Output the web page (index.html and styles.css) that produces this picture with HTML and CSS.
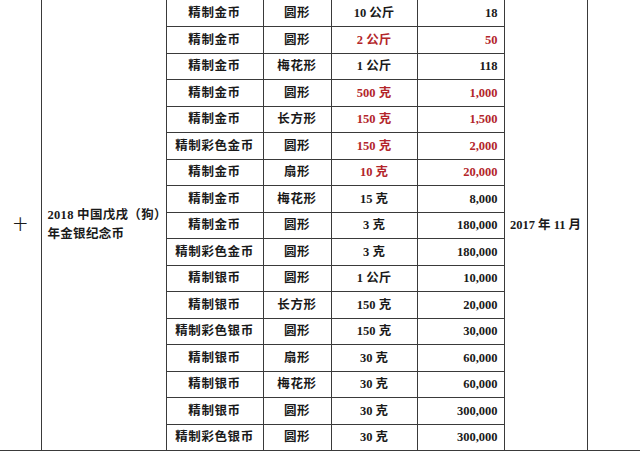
FILE: index.html
```html
<!DOCTYPE html>
<html lang="zh-CN">
<head>
<meta charset="utf-8">
<title>2018中国戊戌（狗）年金银纪念币</title>
<link rel="stylesheet" href="styles.css">
</head>
<body>
<table class="coins">
  <colgroup>
    <col class="c-no"><col class="c-name"><col class="c-kind"><col class="c-shape"><col class="c-weight"><col class="c-count"><col class="c-date"><col class="c-note">
  </colgroup>
  <tbody>
    <tr>
      <td class="no" rowspan="17">十</td>
      <td class="name" rowspan="17">2018 中国戊戌（狗）<br>年金银纪念币</td>
      <td class="kind">精制金币</td><td class="shape">圆形</td><td class="weight">10 公斤</td><td class="count">18</td>
      <td class="date" rowspan="17">2017 年 11 月</td>
      <td class="note" rowspan="17"></td>
    </tr>
    <tr class="red"><td class="kind">精制金币</td><td class="shape">圆形</td><td class="weight">2 公斤</td><td class="count">50</td></tr>
    <tr><td class="kind">精制金币</td><td class="shape">梅花形</td><td class="weight">1 公斤</td><td class="count">118</td></tr>
    <tr class="red"><td class="kind">精制金币</td><td class="shape">圆形</td><td class="weight">500 克</td><td class="count">1,000</td></tr>
    <tr class="red"><td class="kind">精制金币</td><td class="shape">长方形</td><td class="weight">150 克</td><td class="count">1,500</td></tr>
    <tr class="red"><td class="kind">精制彩色金币</td><td class="shape">圆形</td><td class="weight">150 克</td><td class="count">2,000</td></tr>
    <tr class="red"><td class="kind">精制金币</td><td class="shape">扇形</td><td class="weight">10 克</td><td class="count">20,000</td></tr>
    <tr><td class="kind">精制金币</td><td class="shape">梅花形</td><td class="weight">15 克</td><td class="count">8,000</td></tr>
    <tr><td class="kind">精制金币</td><td class="shape">圆形</td><td class="weight">3 克</td><td class="count">180,000</td></tr>
    <tr><td class="kind">精制彩色金币</td><td class="shape">圆形</td><td class="weight">3 克</td><td class="count">180,000</td></tr>
    <tr><td class="kind">精制银币</td><td class="shape">圆形</td><td class="weight">1 公斤</td><td class="count">10,000</td></tr>
    <tr><td class="kind">精制银币</td><td class="shape">长方形</td><td class="weight">150 克</td><td class="count">20,000</td></tr>
    <tr><td class="kind">精制彩色银币</td><td class="shape">圆形</td><td class="weight">150 克</td><td class="count">30,000</td></tr>
    <tr><td class="kind">精制银币</td><td class="shape">扇形</td><td class="weight">30 克</td><td class="count">60,000</td></tr>
    <tr><td class="kind">精制银币</td><td class="shape">梅花形</td><td class="weight">30 克</td><td class="count">60,000</td></tr>
    <tr><td class="kind">精制银币</td><td class="shape">圆形</td><td class="weight">30 克</td><td class="count">300,000</td></tr>
    <tr><td class="kind">精制彩色银币</td><td class="shape">圆形</td><td class="weight">30 克</td><td class="count">300,000</td></tr>
  </tbody>
</table>
</body>
</html>
```

FILE: styles.css
```css
html, body {
  margin: 0;
  padding: 0;
  background: #ffffff;
}

body {
  width: 640px;
  height: 453px;
  overflow: hidden;
}

.coins {
  border-collapse: collapse;
  table-layout: fixed;
  width: 640px;
  font-family: "Liberation Serif", "Noto Sans CJK SC", serif;
  font-size: 12.5px;
  font-weight: bold;
  color: #1a1a1a;
}

.c-no { width: 41px; }
.c-name { width: 125px; }
.c-kind { width: 97px; }
.c-shape { width: 68px; }
.c-weight { width: 86px; }
.c-count { width: 87px; }
.c-date { width: 83px; }
.c-note { width: 53px; }

.coins tr {
  height: 26.5px;
}

.coins td {
  border: 1px solid #3a3a3a;
  padding: 0 6px;
  text-align: center;
  vertical-align: middle;
  white-space: nowrap;
  line-height: 16px;
}

.coins tr:first-child td {
  border-top: none;
}

.coins td.no {
  border-left: none;
  font-weight: normal;
  font-size: 14px;
  padding: 0;
}

.coins td.name {
  text-align: left;
  line-height: 19px;
  letter-spacing: 0.3px;
  padding: 0 4px 0 6px;
}

.coins td.kind,
.coins td.shape {
  letter-spacing: 0.6px;
  padding: 0 2px;
}

.coins td.count {
  text-align: right;
  padding-right: 6px;
}

.coins td.date {
  padding: 0 4px;
}

.coins tr.red td.weight,
.coins tr.red td.count {
  color: #b3262b;
}
```
